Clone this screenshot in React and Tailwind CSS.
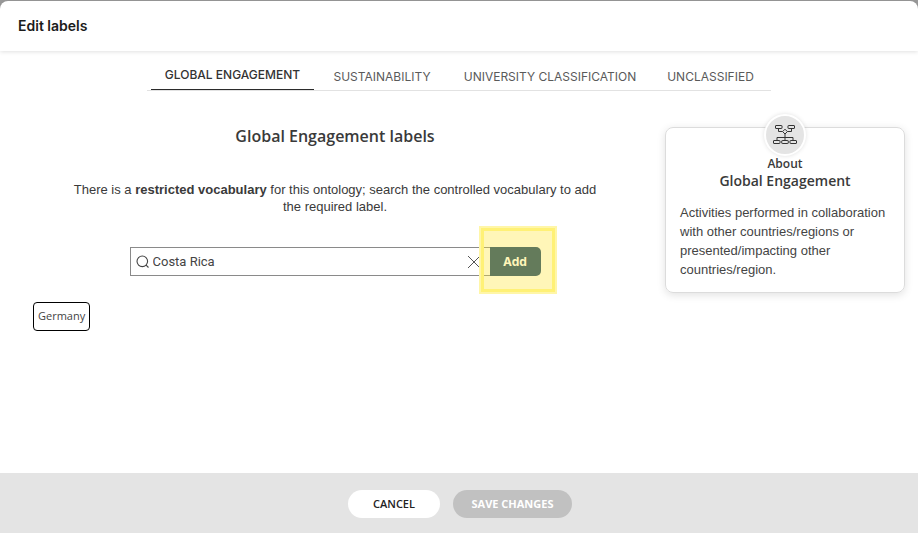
import React, { useState } from 'react';

const TABS = [
  { label: 'Global Engagement', width: 'w-[163px]' },
  { label: 'Sustainability', width: 'w-[136px]' },
  { label: 'University Classification', width: 'w-[200px]' },
  { label: 'Unclassified', width: 'w-[121px]' },
];

function OntologyIcon() {
  return (
    <svg width="24" height="20" viewBox="0 0 24 20" fill="none" stroke="#333333" strokeWidth="1" aria-hidden="true">
      <rect x="2.5" y="0.5" width="6.5" height="3" rx="0.5" />
      <rect x="15" y="0.5" width="6.5" height="3" rx="0.5" />
      <path d="M5.5 3.5V6.5H9.5M18.5 3.5V6.5H14.5" />
      <path d="M12 4.2L14.4 6.6L12 9L9.6 6.6Z" />
      <path d="M12 9V15.5M4 15.5V12.5H20V15.5" />
      <rect x="0.5" y="15.5" width="6.5" height="3" rx="0.5" />
      <rect x="8.75" y="15.5" width="6.5" height="3" rx="0.5" />
      <rect x="17" y="15.5" width="6.5" height="3" rx="0.5" />
    </svg>
  );
}

function LabelSearch() {
  const [query, setQuery] = useState('Costa Rica');

  return (
    <form onSubmit={(e) => e.preventDefault()} className="mt-8 flex h-[29px] w-full max-w-[411px]">
      <div className="flex min-w-0 flex-1 items-center border border-r-0 border-[#8a8a8a] pl-[5px] pr-[9px]">
        <svg width="14" height="14" viewBox="0 0 14 14" fill="none" stroke="#444444" strokeWidth="1.1" aria-hidden="true">
          <circle cx="6.3" cy="6.3" r="5.3" />
          <path d="M10.1 10.1L12.5 12.5" />
        </svg>
        <input
          type="text"
          aria-label="Search labels"
          value={query}
          onChange={(e) => setQuery(e.target.value)}
          className="min-w-0 flex-1 px-[3px] font-['Roboto',sans-serif] text-[13px] text-[#444444] outline-none"
        />
        <button type="button" aria-label="Clear search" onClick={() => setQuery('')} className="cursor-pointer">
          <svg width="14" height="14" viewBox="0 0 14 14" fill="none" stroke="#555555" strokeWidth="1">
            <path d="M1 1L13 13M13 1L1 13" />
          </svg>
        </button>
      </div>
      <div className="relative">
        <button type="submit" className="h-[29px] w-[51px] cursor-pointer rounded-r-[5px] bg-[#124270] font-['Inter',sans-serif] text-xs font-bold text-white">
          Add
        </button>
        {/* Highlight around the add button */}
        <div className="pointer-events-none absolute -top-[21px] -right-4 -bottom-[18px] -left-[11px] border-2 border-[#fff6a8] bg-[#ffe534]/35">
          <div className="h-full border-3 border-[#fff176]" />
        </div>
      </div>
    </form>
  );
}

function AboutCard() {
  return (
    <aside className="relative mt-9 w-60 shrink-0 self-start rounded-lg border border-[#dcdcdc] px-[14px] pt-7 pb-[13px] shadow-[0_2px_8px_rgba(0,0,0,0.12)]">
      <div className="absolute -top-[14px] left-1/2 flex size-[42px] -translate-x-1/2 items-center justify-center rounded-full border-2 border-white bg-[#e4e4e4] shadow-[0_0_4px_rgba(0,0,0,0.12)]">
        <OntologyIcon />
      </div>
      <h3 className="text-center font-['Open_Sans',sans-serif] font-semibold text-[#3a3a3a]">
        <span className="block text-xs leading-4">About</span>
        <span className="block text-sm leading-[18px]">Global Engagement</span>
      </h3>
      <p className="mt-[13px] font-['Liberation_Sans',Arial,sans-serif] text-[13px] leading-[19px] text-[#444444]">
        Activities performed in collaboration with other countries/regions or presented/impacting other countries/region.
      </p>
    </aside>
  );
}

export default function App() {
  const [activeTab, setActiveTab] = useState('Global Engagement');

  return (
    <div className="flex min-h-screen flex-col bg-[#999999] pt-px">
      <div className="flex flex-1 flex-col rounded-t-lg bg-white">
        <header className="flex h-[50px] items-center rounded-t-lg px-[18px] shadow-[0_1px_4px_rgba(0,0,0,0.12)]">
          <h1 className="font-['Inter',sans-serif] text-sm font-semibold text-[#1c1c1c]">Edit labels</h1>
        </header>

        <nav role="tablist" className="mx-auto mt-[10px] flex border-b border-[#e2e2e2] pl-1">
          {TABS.map((tab) => (
            <button
              key={tab.label}
              role="tab"
              type="button"
              aria-selected={tab.label === activeTab}
              onClick={() => setActiveTab(tab.label)}
              className={`h-[29px] cursor-pointer font-['Inter',sans-serif] text-xs whitespace-nowrap uppercase ${tab.width} ${
                tab.label === activeTab ? 'border-b border-[#2b2b2b] font-medium text-[#333333]' : 'pt-[3px] text-[#5a5a5a]'
              }`}
            >
              {tab.label}
            </button>
          ))}
        </nav>

        <main className="flex flex-1 pr-[13px] pl-[5px]">
          <section className="flex min-w-0 flex-1 flex-col items-center">
            <h2 className="mt-[33px] font-['Open_Sans',sans-serif] text-base leading-6 font-semibold text-[#3a3a3a]">
              Global Engagement labels
            </h2>
            <p className="mt-[33px] max-w-[560px] text-center font-['Liberation_Sans',Arial,sans-serif] text-[13px] leading-[17px] text-[#3a3a3a]">
              There is a <strong>restricted vocabulary</strong> for this ontology; search the controlled vocabulary to add
              <br />
              the required label.
            </p>
            <LabelSearch />
            <ul className="mt-[26px] flex w-full px-7">
              <li className="flex h-[29px] items-center rounded border border-black px-1 font-['Open_Sans',sans-serif] text-[11px] text-[#444444]">
                Germany
              </li>
            </ul>
          </section>
          <AboutCard />
        </main>

        <footer className="flex h-[60px] items-center justify-center gap-[13px] bg-[#e4e4e4] pt-[2px] pl-[2px] font-['Open_Sans',sans-serif] text-[11px]">
          <button type="button" className="h-7 w-[92px] cursor-pointer rounded-full bg-white font-semibold text-[#222222]">
            CANCEL
          </button>
          <button type="button" disabled className="h-7 w-[119px] rounded-full bg-[#c1c1c1] font-bold text-white">
            SAVE CHANGES
          </button>
        </footer>
      </div>
    </div>
  );
}
